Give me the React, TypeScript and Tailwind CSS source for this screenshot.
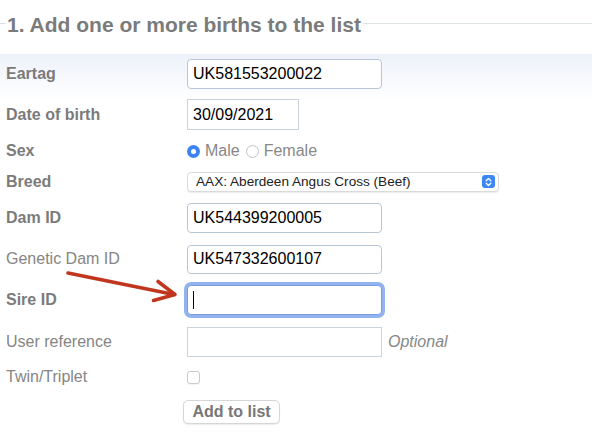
import React from "react";

const labelBold = "font-bold text-[16px] text-[#7b7b7b]";
const labelNormal = "text-[16px] text-[#858585]";

function Row({ h, label, bold, children }: { h: string; label?: string; bold?: boolean; children?: React.ReactNode }) {
  return (
    <div className={`flex items-center ${h}`}>
      <div className={`w-[187px] shrink-0 pl-[6px] leading-[20px] ${bold ? labelBold : labelNormal}`}>{label}</div>
      <div className="flex items-center">{children}</div>
    </div>
  );
}

function TextBox({ value, w, h, square }: { value?: string; w: string; h: string; square?: boolean }) {
  return (
    <div
      className={`${w} ${h} flex items-center bg-white border pl-[5px] text-[16px] text-black leading-[20px] ${
        square ? "border-[#c9d3dd]" : "rounded-[4px] border-[#b7c6d6]"
      }`}
    >
      {value}
    </div>
  );
}

function Radio({ checked }: { checked?: boolean }) {
  return checked ? (
    <span className="w-[13px] h-[13px] rounded-full bg-[#3b83f6] flex items-center justify-center">
      <span className="w-[5px] h-[5px] rounded-full bg-white" />
    </span>
  ) : (
    <span className="w-[13px] h-[13px] rounded-full border border-[#c4c4c4] bg-white" />
  );
}

export default function App() {
  return (
    <div className="relative w-[592px] h-[444px] overflow-hidden bg-white" style={{ fontFamily: '"Liberation Sans", Arial, sans-serif' }}>
      {/* heading as fieldset legend */}
      <div className="flex items-start pt-[13px] h-[54px]">
        <div className="w-[6px] h-px bg-[#dde2e8] mt-[10px]" />
        <div className="ml-px font-bold text-[21px] leading-[24px] text-[#7b7b7b] whitespace-nowrap">1. Add one or more births to the list</div>
        <div className="flex-1 h-px bg-[#dde2e8] mt-[10px] ml-[2px]" />
      </div>

      <div className="bg-[linear-gradient(to_bottom,#edf1fa_0px,#ffffff_46px)]">
        <Row h="h-[40px]" label="Eartag" bold>
          <TextBox value="UK581553200022" w="w-[195px]" h="h-[30px]" />
        </Row>
        <Row h="h-[41px]" label="Date of birth" bold>
          <TextBox value="30/09/2021" w="w-[112px]" h="h-[31px]" square />
        </Row>
        <Row h="h-[32px]" label="Sex" bold>
          <div className="flex items-center text-[16px] leading-[20px] text-[#888]">
            <Radio checked />
            <span className="ml-[5px]">Male</span>
            <span className="ml-[6px] flex"><Radio /></span>
            <span className="ml-[5px]">Female</span>
          </div>
        </Row>
        <Row h="h-[29px]" label="Breed" bold>
          <div className="w-[312px] h-[20px] flex items-center justify-between rounded-[4px] border border-[#dadada] bg-white shadow-[0_1px_1px_rgba(0,0,0,0.08)] pl-[8px] pr-[3px]">
            <span className="text-[13.6px] leading-[16px] text-[#222] whitespace-nowrap">AAX: Aberdeen Angus Cross (Beef)</span>
            <span className="w-[13px] h-[13px] rounded-[3px] bg-[#3d86f5] flex items-center justify-center">
              <svg width="7" height="10" viewBox="0 0 7 10" fill="none" stroke="#fff" strokeWidth="1.3" strokeLinecap="round" strokeLinejoin="round">
                <path d="M1.2 3.8 L3.5 1.5 L5.8 3.8" />
                <path d="M1.2 6.2 L3.5 8.5 L5.8 6.2" />
              </svg>
            </span>
          </div>
        </Row>
        <Row h="h-[43px]" label="Dam ID" bold>
          <TextBox value="UK544399200005" w="w-[195px]" h="h-[30px]" />
        </Row>
        <Row h="h-[40px]" label="Genetic Dam ID">
          <TextBox value="UK547332600107" w="w-[195px]" h="h-[29px]" />
        </Row>
        <Row h="h-[42px]" label="Sire ID" bold>
          <div className="w-[195px] h-[30px] flex items-center bg-white rounded-[4px] border border-[#7c9ee0] shadow-[0_0_0_3px_#93b3ec] pl-[5px]">
            <span className="w-px h-[18px] bg-black" />
          </div>
        </Row>
        <Row h="h-[41px]" label="User reference">
          <TextBox w="w-[195px]" h="h-[30px]" square />
          <span className="ml-[6px] italic text-[16px] leading-[20px] text-[#888]">Optional</span>
        </Row>
        <Row h="h-[30px]" label="Twin/Triplet">
          <span className="w-[13px] h-[13px] rounded-[3px] border border-[#cacaca] bg-white shadow-[0_1px_1px_rgba(0,0,0,0.05)]" />
        </Row>
        <Row h="h-[39px]">
          <button className="-ml-[4px] w-[97px] h-[24px] rounded-[5px] border border-[#d6d6d6] bg-white shadow-[0_1px_1px_rgba(0,0,0,0.08)] font-bold text-[16px] leading-[20px] text-[#777]">
            Add to list
          </button>
        </Row>
      </div>

      {/* annotation arrow */}
      <svg className="absolute left-0 top-0 pointer-events-none" width="592" height="444" viewBox="0 0 592 444" fill="none">
        <g stroke="#c1361f" strokeWidth="3.6" strokeLinecap="round" strokeLinejoin="round">
          <path d="M68 273 L174 294.5" />
          <path d="M158 281.5 L175 294.5 L153.5 300.5" />
        </g>
      </svg>
    </div>
  );
}
